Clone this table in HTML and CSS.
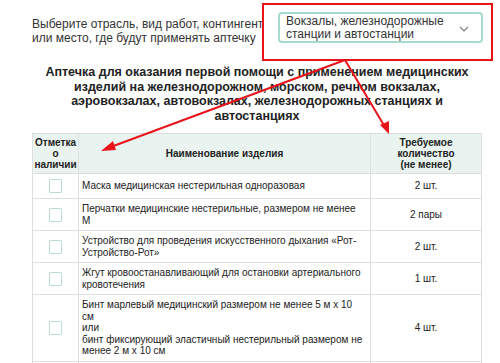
FILE: index.html
```html
<!DOCTYPE html>
<html lang="ru">
<head>
<meta charset="utf-8">
<link rel="stylesheet" href="styles.css">
</head>
<body>
<div class="page">
  <div class="picker">
    <div class="picker-label">Выберите отрасль, вид работ, контингент или место, где будут применять аптечку</div>
    <div class="select">
      <span class="select-text">Вокзалы, железнодорожные станции и автостанции</span>
      <svg class="chevron" width="10" height="6" viewBox="0 0 10 6"><path d="M1 1 L5 5 L9 1" fill="none" stroke="#7a7a7a" stroke-width="1.1"/></svg>
    </div>
  </div>
  <h1 class="title">Аптечка для оказания первой помощи с применением медицинских изделий на железнодорожном, морском, речном вокзалах, аэровокзалах, автовокзалах, железнодорожных станциях и автостанциях</h1>
  <table class="kit">
    <colgroup>
      <col class="w-check">
      <col class="w-name">
      <col class="w-qty">
    </colgroup>
    <thead>
      <tr>
        <th>Отметка о наличии</th>
        <th>Наименование изделия</th>
        <th class="th-qty">Требуемое количество (не менее)</th>
      </tr>
    </thead>
    <tbody>
      <tr><td class="cell-check"><span class="box"></span></td><td class="cell-name">Маска медицинская нестерильная одноразовая</td><td class="cell-qty">2 шт.</td></tr>
      <tr><td class="cell-check"><span class="box"></span></td><td class="cell-name">Перчатки медицинские нестерильные, размером не менее<br>М</td><td class="cell-qty">2 пары</td></tr>
      <tr><td class="cell-check"><span class="box"></span></td><td class="cell-name">Устройство для проведения искусственного дыхания «Рот-Устройство-Рот»</td><td class="cell-qty">2 шт.</td></tr>
      <tr><td class="cell-check"><span class="box"></span></td><td class="cell-name">Жгут кровоостанавливающий для остановки артериального кровотечения</td><td class="cell-qty">1 шт.</td></tr>
      <tr><td class="cell-check"><span class="box"></span></td><td class="cell-name">Бинт марлевый медицинский размером не менее 5 м х 10<br>см<br>или<br>бинт фиксирующий эластичный нестерильный размером не менее 2 м х 10 см</td><td class="cell-qty">4 шт.</td></tr>
      <tr><td class="cell-check"><span class="box"></span></td><td class="cell-name">Бинт марлевый медицинский размером не менее 7 м х 14 см</td><td class="cell-qty">4 шт.</td></tr>
    </tbody>
  </table>
  <svg class="annotations" width="500" height="363" viewBox="0 0 500 363">
    <rect x="263" y="4" width="229" height="56" fill="none" stroke="#e8141a" stroke-width="2"/>
    <line x1="345" y1="60" x2="108" y2="148" stroke="#e8141a" stroke-width="2"/>
    <polygon points="101,151 113,141 116,150" fill="#e8141a"/>
    <line x1="345" y1="60" x2="385" y2="127" stroke="#e8141a" stroke-width="2"/>
    <polygon points="389,134 380,125 389,121" fill="#e8141a"/>
  </svg>
</div>
</body>
</html>
```

FILE: styles.css
```css
* { box-sizing: border-box; }
html, body { margin: 0; padding: 0; background: #fff; }
body {
  font-family: "Liberation Sans", Arial, sans-serif;
  color: #222;
  width: 500px;
  height: 363px;
  overflow: hidden;
}
.page {
  position: relative;
  padding: 12px 18px 0 32px;
}
.picker {
  display: flex;
  align-items: flex-start;
  gap: 12px;
}
.picker-label {
  width: 234px;
  flex: none;
  font-size: 12px;
  line-height: 14px;
  color: #333;
  padding-top: 5px;
}
.select {
  width: 205px;
  flex: none;
  height: 31px;
  border: 2px solid #a7dacf;
  border-radius: 4px;
  display: flex;
  align-items: center;
  gap: 6px;
  padding: 0 12px 0 6px;
  font-size: 12px;
  line-height: 13px;
  color: #333;
}
.select-text { flex: 1; }
.chevron { margin-top: 2px; flex: none; }
.title {
  margin: 20px 0 0 0;
  padding: 0 10px;
  font-size: 12.5px;
  line-height: 14.5px;
  font-weight: bold;
  text-align: center;
  color: #222;
}
.kit {
  margin-top: 10px;
  width: 450px;
  table-layout: fixed;
  border-collapse: collapse;
  font-size: 10px;
  line-height: 11.5px;
  color: #222;
}
.w-check { width: 46px; }
.w-qty { width: 111px; }
.kit th, .kit td {
  border: 1px solid #dedede;
}
.kit th {
  background: #e9f4f0;
  font-weight: bold;
  padding: 3px 1px;
  line-height: 11px;
  text-align: center;
}
.kit .th-qty { padding: 3px 18px; }
.kit td {
  padding: 4px 3px;
  vertical-align: middle;
}
.cell-check { text-align: center; }
.cell-qty { text-align: center; }
.box {
  display: inline-block;
  width: 13px;
  height: 14px;
  border: 1px solid #b9ddd2;
  border-radius: 1px;
  vertical-align: middle;
  margin: 1px 0;
}
.annotations {
  position: absolute;
  left: 0;
  top: 0;
  pointer-events: none;
}
```
